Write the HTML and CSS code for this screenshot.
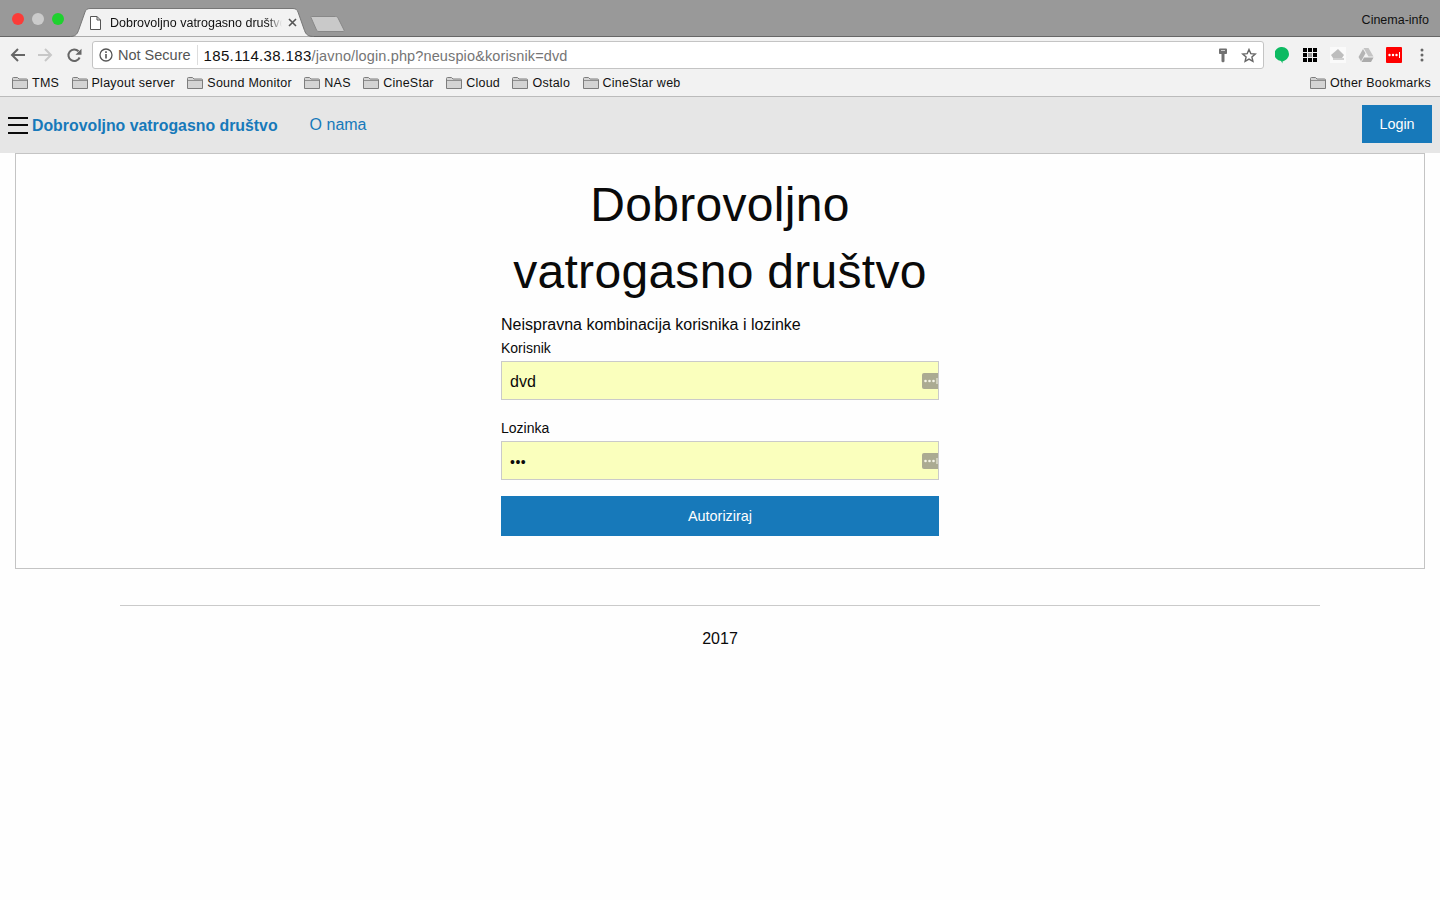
FILE: index.html

```html
<!DOCTYPE html>
<html>
<head>
  <title>Dobrovoljno vatrogasno društvo</title>
  <link rel="stylesheet" href="styles.css">
</head>
<body>
  <svg class="defs" width="0" height="0">
    <symbol id="folder" viewBox="0 0 16 12">
      <path d="M.5 11.5v-10a1 1 0 0 1 1-1h4l1.5 1.500h7.500a1 1 0 0 1 1 1v8.500z" fill="#d4d4d4" stroke="#7d7d7d"/>
      <path d="M1 3.500h14" stroke="#8f8f8f"/>
    </symbol>
    <symbol id="pw-dots" viewBox="0 0 16 16">
      <path d="M2 0h14v16H2a2 2 0 0 1-2-2V2a2 2 0 0 1 2-2z" fill="#abab92"/>
      <circle cx="3.500" cy="8" r="1.300" fill="#f4f4e6"/>
      <circle cx="7.500" cy="8" r="1.300" fill="#f4f4e6"/>
      <circle cx="11.500" cy="8" r="1.300" fill="#f4f4e6"/>
      <path d="M15 5v6" stroke="#f4f4e6"/>
    </symbol>
  </svg>

  <div class="titlebar">
    <div class="lights">
      <span class="light red"></span>
      <span class="light grey"></span>
      <span class="light green"></span>
    </div>
    <div class="tab">
      <svg class="tab-shape" width="244" height="29" viewBox="0 0 244 29">
        <path d="M0 28.500c5 0 7-2 8.500-6L15 4c.7-2 2-3.500 5-3.500h203c3 0 4.300 1.500 5 3.500l6.500 18.500c1.500 4 3.500 6 9.500 6" fill="#f2f2f2" stroke="#777"/>
      </svg>
      <svg class="page-icon" width="11" height="14" viewBox="0 0 11 14">
        <path d="M.5.500h6.500l3.500 3.500v9.500h-10zM7 .500v3.500h3.500" fill="#fff" stroke="#555"/>
      </svg>
      <span class="tab-title">Dobrovoljno vatrogasno društvo</span>
      <svg class="tab-close" width="9" height="9" viewBox="0 0 9 9">
        <path d="M1 1l7 7M8 1l-7 7" stroke="#555" stroke-width="1.600"/>
      </svg>
    </div>
    <svg class="new-tab" width="36" height="18" viewBox="0 0 36 18">
      <path d="M1.500 1.500h24c1.500 0 2 .5 2.500 1.500l6 12c.5 1-.2 1.500-1 1.500H9c-1.500 0-2-.5-2.500-1.500L1 2.500c-.3-.6 0-1 .5-1z" fill="#c9c9c9" stroke="#888"/>
    </svg>
    <span class="profile">Cinema-info</span>
  </div>

  <div class="toolbar">
    <svg class="tool-btn" width="16" height="14" viewBox="0 0 16 14">
      <path d="M15 7H2.500M8 1L2 7l6 6" fill="none" stroke="#666" stroke-width="2"/>
    </svg>
    <svg class="tool-btn" width="16" height="14" viewBox="0 0 16 14">
      <path d="M1 7h12.500M8 1l6 6-6 6" fill="none" stroke="#c8c8c8" stroke-width="2"/>
    </svg>
    <svg class="tool-btn" width="15" height="15" viewBox="0 0 15 15">
      <path d="M12.600 9.500A5.800 5.800 0 1 1 11.500 3.300" fill="none" stroke="#666" stroke-width="2"/>
      <path d="M14.500 .8v6h-6z" fill="#666"/>
    </svg>
    <div class="omnibox">
      <svg class="info" width="14" height="14" viewBox="0 0 14 14">
        <circle cx="7" cy="7" r="6" fill="none" stroke="#555" stroke-width="1.300"/>
        <path d="M7 6v4.500" stroke="#555" stroke-width="1.600"/>
        <path d="M7 3.300v1.700" stroke="#555" stroke-width="1.600"/>
      </svg>
      <span class="not-secure">Not Secure</span>
      <span class="omni-sep"></span>
      <span class="url"><b>185.114.38.183</b>/javno/login.php?neuspio&amp;korisnik=dvd</span>
      <svg class="key" width="10" height="15" viewBox="0 0 10 15">
        <path d="M1 1.500c0-.5.500-1 1-1h6c.5 0 1 .5 1 1V5c0 .7-.5 1-1 1H6.500v7.500L5 14.500 3.500 13.500V6H2c-.5 0-1-.3-1-1z" fill="#707070"/>
        <path d="M3 2.500h4" stroke="#ccc"/>
      </svg>
      <svg class="star" width="16" height="15" viewBox="0 0 16 15">
        <path d="M8 1.500l1.800 4.100 4.500.4-3.400 3 1 4.400L8 11.100l-3.900 2.300 1-4.400-3.400-3 4.500-.4z" fill="none" stroke="#666" stroke-width="1.400"/>
      </svg>
    </div>
    <div class="extensions">
      <svg width="14" height="17" viewBox="0 0 14 17">
        <path d="M7 0a7 7 0 0 1 7 7c0 4-3.500 6.500-6.500 7.500V16.500L6 14A7 7 0 0 1 7 0z" fill="#0dba62"/>
      </svg>
      <svg width="14" height="14" viewBox="0 0 14 14">
        <path d="M0 0h4v4H0zM5 0h4v4H5zM10 0h4v4h-4zM0 5h4v4H0zM10 5h4v4h-4zM0 10h4v4H0zM5 10h4v4H5zM10 10h4v4h-4z" fill="#000"/>
        <path d="M5 5h4v4H5z" fill="#999"/>
      </svg>
      <svg width="16" height="16" viewBox="0 0 16 16">
        <path d="M0 0h16v16H0z" fill="#fafafa"/>
        <path d="M8 2l6 6-2 3H3L1 8z" fill="#bdbdbd"/>
        <path d="M3 12h11" stroke="#cfcfcf" stroke-width="2"/>
      </svg>
      <svg width="16" height="14" viewBox="0 0 16 14">
        <path d="M5.500 0h5l5 8.500h-5z" fill="#c4c4c4"/>
        <path d="M5 1l2.500 4.300L3 13.500.5 9z" fill="#b4b4b4"/>
        <path d="M6 9.500h9.500L13 14H3.500z" fill="#ababab"/>
      </svg>
      <svg width="16" height="16" viewBox="0 0 16 16">
        <rect width="16" height="16" rx="1" fill="#f00"/>
        <circle cx="3.500" cy="8" r="1.200" fill="#fff"/>
        <circle cx="7" cy="8" r="1.200" fill="#fff"/>
        <circle cx="10.500" cy="8" r="1.200" fill="#fff"/>
        <path d="M13.500 5v6" stroke="#fff"/>
      </svg>
      <svg width="4" height="14" viewBox="0 0 4 14">
        <circle cx="2" cy="2" r="1.500" fill="#666"/>
        <circle cx="2" cy="7" r="1.500" fill="#666"/>
        <circle cx="2" cy="12" r="1.500" fill="#666"/>
      </svg>
    </div>
  </div>

  <div class="bookmarks">
    <span class="bookmark"><svg width="16" height="12"><use href="#folder"/></svg>TMS</span>
    <span class="bookmark"><svg width="16" height="12"><use href="#folder"/></svg>Playout server</span>
    <span class="bookmark"><svg width="16" height="12"><use href="#folder"/></svg>Sound Monitor</span>
    <span class="bookmark"><svg width="16" height="12"><use href="#folder"/></svg>NAS</span>
    <span class="bookmark"><svg width="16" height="12"><use href="#folder"/></svg>CineStar</span>
    <span class="bookmark"><svg width="16" height="12"><use href="#folder"/></svg>Cloud</span>
    <span class="bookmark"><svg width="16" height="12"><use href="#folder"/></svg>Ostalo</span>
    <span class="bookmark"><svg width="16" height="12"><use href="#folder"/></svg>CineStar web</span>
    <span class="bookmark other"><svg width="16" height="12"><use href="#folder"/></svg>Other Bookmarks</span>
  </div>

  <div class="top-bar">
    <div class="menu-icon"><span></span><span></span><span></span></div>
    <a class="brand">Dobrovoljno vatrogasno društvo</a>
    <a class="nav-link">O nama</a>
    <a class="login-btn">Login</a>
  </div>

  <div class="card">
    <div class="login">
      <h1>Dobrovoljno vatrogasno društvo</h1>
      <p class="message">Neispravna kombinacija korisnika i lozinke</p>
      <label class="field-label" for="user">Korisnik</label>
      <div class="field">
        <input id="user" type="text" value="dvd">
        <svg class="pw-icon" width="16" height="16"><use href="#pw-dots"/></svg>
      </div>
      <label class="field-label" for="pass">Lozinka</label>
      <div class="field">
        <input id="pass" type="password" value="dvd">
        <svg class="pw-icon" width="16" height="16"><use href="#pw-dots"/></svg>
      </div>
      <button class="submit">Autoriziraj</button>
    </div>
  </div>

  <div class="footer">
    <hr>
    <p>2017</p>
  </div>
</body>
</html>
```

FILE: styles.css

```css
* {
  box-sizing: border-box;
}

body {
  margin: 0;
  background-color: #fefefe;
  color: #0a0a0a;
  font-family: "Liberation Sans", Arial, sans-serif;
  font-size: 16px;
  overflow: hidden;
}

.defs {
  position: absolute;
}

/* browser window */
.titlebar {
  display: flex;
  height: 37px;
  background-color: #999;
  border-bottom: 1px solid #666;
  position: relative;
}

.lights {
  display: flex;
  gap: 8px;
  padding: 13px 0 0 12px;
  width: 70px;
}

.light {
  width: 12px;
  height: 12px;
  border-radius: 50%;
}

.red { background-color: #fb3c38; }
.grey { background-color: #cbcbcb; }
.green { background-color: #1ed12e; }

.tab {
  position: relative;
  width: 244px;
  height: 29px;
  margin-top: 8px;
  display: flex;
  align-items: center;
  font-size: 12.5px;
  color: #111;
}

.tab-shape {
  position: absolute;
  left: 0;
  top: 0;
}

.page-icon {
  position: relative;
  margin-left: 20px;
  flex: none;
}

.tab-title {
  position: relative;
  margin-left: 9px;
  width: 172px;
  white-space: nowrap;
  overflow: hidden;
  -webkit-mask-image: linear-gradient(to right, #000 158px, transparent 172px);
  mask-image: linear-gradient(to right, #000 158px, transparent 172px);
}

.tab-close {
  position: relative;
  margin-left: 6px;
  flex: none;
}

.new-tab {
  margin: 15px 0 0 -4px;
}

.profile {
  margin-left: auto;
  padding: 13px 11px 0 0;
  font-size: 12.500px;
  color: #111;
}

.toolbar {
  display: flex;
  align-items: center;
  height: 32px;
  background-color: #f2f2f2;
  padding: 4px 0 0 10px;
}

.tool-btn {
  margin-right: 11px;
  flex: none;
}

.tool-btn:nth-child(2) {
  margin-right: 14px;
}

.tool-btn:nth-child(3) {
  margin-right: 10px;
}

.omnibox {
  display: flex;
  align-items: center;
  width: 1172px;
  height: 28px;
  background-color: #fff;
  border: 1px solid #c4c4c4;
  border-radius: 3px;
  padding: 0 6px 0 6px;
  color: #757575;
  font-size: 14.500px;
}

.not-secure {
  margin-left: 5px;
  color: #555;
}

.omni-sep {
  width: 1px;
  height: 20px;
  margin: 0 6px;
  background-color: #ddd;
}

.url {
  letter-spacing: .13px;
}

.url b {
  font-weight: normal;
  font-size: 15px;
  letter-spacing: .35px;
  color: #111;
}

.key {
  margin-left: auto;
  margin-right: 13px;
}

.extensions {
  display: grid;
  grid-template-columns: repeat(6, 28px);
  justify-items: center;
  align-items: center;
  margin-left: 4px;
}

.bookmarks {
  display: flex;
  align-items: center;
  height: 28px;
  background-color: #f2f2f2;
  border-bottom: 1px solid #bbb;
  padding: 0 9px 0 12px;
  font-size: 12.500px;
  letter-spacing: .25px;
  color: #111;
  gap: 12.400px;
}

.bookmark {
  display: flex;
  align-items: center;
  gap: 4px;
  white-space: nowrap;
}

.other {
  margin-left: auto;
}

/* page */
.top-bar {
  display: flex;
  align-items: center;
  height: 56px;
  background-color: #e6e6e6;
  padding: 0 8px;
}

.menu-icon {
  display: flex;
  flex-direction: column;
  gap: 5.500px;
  width: 20px;
  margin-right: 4px;
}

.menu-icon span {
  height: 2px;
  background-color: #0a0a0a;
}

.brand {
  color: #1779ba;
  font-weight: bold;
  font-size: 15.850px;
  margin-top: 2px;
  margin-right: 32px;
}

.nav-link {
  color: #1779ba;
}

.login-btn {
  margin-left: auto;
  margin-bottom: 2px;
  width: 70px;
  height: 38px;
  line-height: 38px;
  text-align: center;
  background-color: #1779ba;
  color: #fefefe;
  font-size: 14.400px;
}

.card {
  margin: 0 15px;
  height: 416px;
  border: 1px solid #c4c4c4;
  padding-top: 17px;
}

.login {
  width: 438px;
  margin: 0 auto;
}

h1 {
  margin: 0 0 8px;
  font-size: 48px;
  font-weight: normal;
  letter-spacing: .3px;
  line-height: 1.4;
  text-align: center;
}

.message {
  margin: 0 0 -1px;
  line-height: 24px;
}

.field-label {
  display: block;
  font-size: 14px;
  line-height: 25px;
}

.field {
  position: relative;
  margin-bottom: 16px;
}

.field input {
  display: block;
  width: 100%;
  height: 39px;
  padding: 9px 8px 7px;
  border: 1px solid #cacaca;
  background-color: #faffbd;
  color: #0a0a0a;
  font-family: inherit;
  font-size: 16px;
  outline: none;
}

.field input[type="password"] {
  font-size: 14px;
  letter-spacing: .5px;
}

.pw-icon {
  position: absolute;
  right: 1px;
  top: 12px;
}

.submit {
  display: block;
  width: 100%;
  height: 40px;
  border: 0;
  background-color: #1779ba;
  color: #fefefe;
  font-family: inherit;
  font-size: 14.400px;
}

.footer {
  width: 1200px;
  margin: 36px auto 0;
}

.footer hr {
  margin: 0 0 20px;
  border: 0;
  border-top: 1px solid #cacaca;
}

.footer p {
  margin: 0;
  padding-top: 1px;
  line-height: 24px;
  text-align: center;
}
```
